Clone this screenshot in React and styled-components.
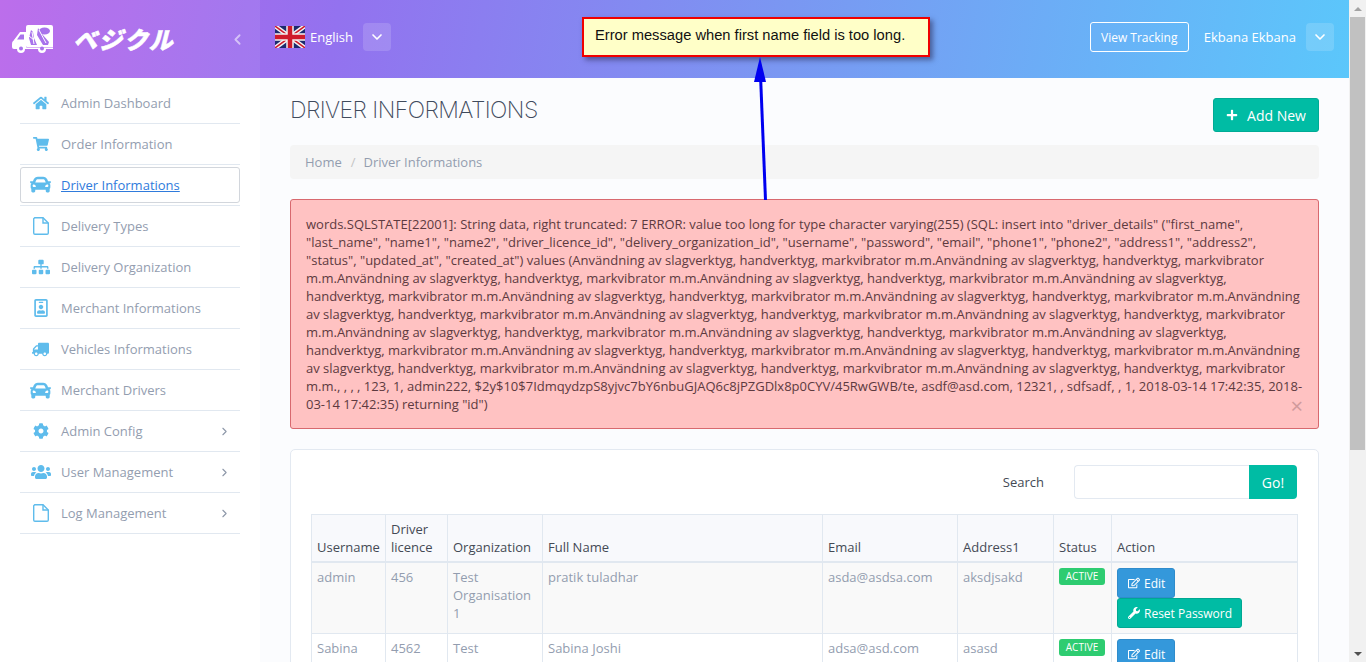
import React from "react";
import styled, { createGlobalStyle } from "styled-components";
import {
  FaHome,
  FaShoppingCart,
  FaCar,
  FaSitemap,
  FaRegIdBadge,
  FaTruck,
  FaCog,
  FaUsers,
  FaPlus,
  FaRegEdit,
  FaWrench,
} from "react-icons/fa";
import { ChevronDown, ChevronLeft, ChevronRight } from "lucide-react";

const GlobalStyle = createGlobalStyle`
  html, body {
    margin: 0;
    height: 100%;
    overflow: hidden;
  }
  body {
    font-family: "Open Sans", "Liberation Sans", sans-serif;
    font-size: 13px;
    color: #73879c;
  }
  * {
    box-sizing: border-box;
  }
`;

const Shell = styled.div`
  position: relative;
  display: flex;
  height: 100vh;
  overflow: hidden;
`;

const Page = styled.div`
  flex: 1;
  min-width: 0;
  display: flex;
  flex-direction: column;
`;

const Header = styled.header`
  flex: none;
  display: flex;
  height: 78px;
  background: linear-gradient(100deg, #b763ea 0%, #9372ef 25%, #7a97f2 58%, #5bc7fb 100%);
`;

const Brand = styled.div`
  flex: none;
  width: 260px;
  display: flex;
  align-items: center;
  padding: 0 14px 0 12px;
  background: rgba(255, 255, 255, 0.07);
  color: #fff;
`;

const LogoText = styled.span`
  margin-left: 20px;
  font-family: "Noto Sans CJK JP", sans-serif;
  font-size: 24px;
  font-weight: 900;
  font-style: italic;
  line-height: 1;
  letter-spacing: 1.5px;
  color: #fff;
  -webkit-text-stroke: 0.5px #fff;
`;

const Collapse = styled.span`
  margin-left: auto;
  display: flex;
  color: rgba(255, 255, 255, 0.55);
`;

const TopBar = styled.div`
  flex: 1;
  display: flex;
  align-items: center;
  padding: 0 15px 4px;
  color: #fff;
`;

const Flag = styled.svg`
  flex: none;
  width: 30px;
  height: 22px;
`;

const Language = styled.span`
  margin-left: 5px;
  margin-right: 10px;
`;

const Caret = styled.button`
  flex: none;
  display: flex;
  align-items: center;
  justify-content: center;
  width: 28px;
  height: 28px;
  padding: 0;
  border: 0;
  border-radius: 4px;
  background: rgba(255, 255, 255, 0.15);
  color: #fff;
`;

const Tracking = styled.button`
  margin-left: auto;
  width: 99px;
  height: 30px;
  padding: 0;
  border: 1px solid #fff;
  border-radius: 3px;
  background: transparent;
  color: #fff;
  font: 12px "Open Sans", sans-serif;
`;

const UserName = styled.span`
  margin-left: 15px;
  margin-right: 10px;
`;

const Body = styled.div`
  flex: 1;
  min-height: 0;
  display: flex;
`;

const Sidebar = styled.nav`
  flex: none;
  width: 260px;
  padding: 5px 20px 0;
  background: #fff;
`;

const NavItem = styled.div`
  display: flex;
  align-items: center;
  height: 41px;
  border-bottom: 1px solid #e1e8f0;
  color: #939daf;
`;

const ActiveBox = styled.div`
  flex: 1;
  display: flex;
  align-items: center;
  height: 36px;
  margin-top: -1px;
  border: 1px solid #d2d6dc;
  border-radius: 3px;
`;

const NavIcon = styled.span`
  flex: none;
  width: 41px;
  display: flex;
  justify-content: center;
  margin-left: ${(p) => (p.$inBox ? "-1px" : "0")};
  color: #5fbcec;
  font-size: ${(p) => p.$size || 16}px;
  transform: ${(p) => (p.$flip ? "scaleX(-1)" : "none")};
`;

const NavLink = styled.a`
  color: #2f7bdc;
  text-decoration: underline;
`;

const NavArrow = styled.span`
  margin-left: auto;
  margin-right: 9px;
  display: flex;
  color: #8d97a8;
`;

const Main = styled.main`
  flex: 1;
  min-width: 0;
  padding: 20px 30px 0;
  background: #fbfcfe;
`;

const TitleRow = styled.div`
  display: flex;
  align-items: flex-start;
  justify-content: space-between;
  height: 47px;
`;

const Title = styled.h1`
  margin: 0;
  font-family: Inter, "Liberation Sans", sans-serif;
  font-size: 23px;
  font-weight: 200;
  line-height: 25px;
  letter-spacing: -0.55px;
  color: #3f4a5c;
`;

const AddButton = styled.button`
  display: flex;
  align-items: center;
  justify-content: center;
  gap: 9px;
  width: 106px;
  height: 34px;
  padding: 0;
  border: 1px solid #00ab95;
  border-radius: 3px;
  background: #00bca4;
  color: #fff;
  font: 14px "Open Sans", sans-serif;
`;

const Breadcrumb = styled.div`
  display: flex;
  align-items: center;
  height: 34px;
  padding: 0 15px;
  border-radius: 4px;
  background: #f5f5f5;
  color: #939daf;
`;

const Slash = styled.span`
  padding: 0 8px 0 9px;
  color: #c4c4c4;
`;

const Alert = styled.div`
  position: relative;
  margin-top: 20px;
  padding: 15px;
  border: 1px solid #d8696f;
  border-radius: 3px;
  background: #ffc2c2;
  color: #5d3a3f;
  line-height: 18px;
`;

const Close = styled.span`
  position: absolute;
  right: 15px;
  bottom: 13px;
  font-size: 22px;
  line-height: 20px;
  color: #d09a9c;
`;

const Card = styled.section`
  margin-top: 20px;
  padding: 15px 20px 0;
  border: 1px solid #e3e9f1;
  border-radius: 5px;
  background: #fff;
`;

const SearchRow = styled.div`
  display: flex;
  align-items: center;
  justify-content: flex-end;
  margin-right: 1px;
`;

const SearchLabel = styled.label`
  margin-right: 30px;
  font-weight: 500;
  color: #444a55;
`;

const SearchInput = styled.input`
  width: 175px;
  height: 34px;
  padding: 0 10px;
  border: 1px solid #e3e9f1;
  border-right: 0;
  border-radius: 4px 0 0 4px;
  background: #fff;
  outline: none;
`;

const GoButton = styled.button`
  width: 48px;
  height: 34px;
  padding: 0;
  border: 0;
  border-radius: 0 4px 4px 0;
  background: #00bca4;
  color: #fff;
  font: 14px "Open Sans", sans-serif;
`;

const Table = styled.table`
  width: 986px;
  margin-top: 15px;
  border-collapse: collapse;
  table-layout: fixed;
  line-height: 18px;
`;

const Col = styled.col`
  width: ${(p) => p.$w}px;
`;

const Th = styled.th`
  padding: 5px;
  border: 1px solid #e1e8f0;
  border-bottom-width: 2px;
  background: #f8f9fc;
  color: #444a55;
  font-weight: 500;
  text-align: left;
  vertical-align: bottom;
`;

const Row = styled.tr`
  background: ${(p) => (p.$odd ? "#f9f9f9" : "#fff")};
`;

const Td = styled.td`
  padding: 5px;
  border: 1px solid #e1e8f0;
  color: #939daf;
  vertical-align: top;
`;

const Badge = styled.span`
  display: block;
  width: 46px;
  height: 17px;
  border-radius: 3px;
  background: #2ecc71;
  color: #fff;
  font-size: 10px;
  font-weight: 500;
  line-height: 17px;
  text-align: center;
`;

const ActionButton = styled.button`
  display: flex;
  align-items: center;
  gap: 4px;
  width: ${(p) => p.$w}px;
  height: 30px;
  padding: 0 0 0 10px;
  border: 1px solid ${(p) => (p.$tone === "edit" ? "#2f8ccb" : "#00a893")};
  border-radius: 3px;
  background: ${(p) => (p.$tone === "edit" ? "#3498db" : "#00bca4")};
  color: #fff;
  font: 12px "Open Sans", sans-serif;
  white-space: nowrap;
`;

const Scrollbar = styled.div`
  flex: none;
  width: 17px;
  display: flex;
  flex-direction: column;
  background: #f1f1f1;
`;

const ScrollArrow = styled.div`
  flex: none;
  height: 17px;
  display: flex;
  align-items: center;
  justify-content: center;
  &::before {
    content: "";
    border-left: 4px solid transparent;
    border-right: 4px solid transparent;
    ${(p) => (p.$up ? "border-bottom: 4px solid #a3a3a3;" : "border-top: 4px solid #505050;")}
  }
`;

const ScrollThumb = styled.div`
  flex: none;
  height: 433px;
  margin: 0 1px;
  background: #c1c1c1;
`;

const ScrollTrack = styled.div`
  flex: 1;
`;

const Note = styled.div`
  position: absolute;
  left: 582px;
  top: 17px;
  width: 348px;
  height: 40px;
  padding-left: 11px;
  border: 2px solid #f00000;
  background: #ffffc8;
  box-shadow: 3px 3px 5px rgba(40, 40, 80, 0.55);
  color: #111;
  font-family: "Liberation Sans", Arial, sans-serif;
  font-size: 14.7px;
  line-height: 32px;
`;

const Arrow = styled.svg`
  position: absolute;
  left: 750px;
  top: 55px;
  width: 24px;
  height: 148px;
`;

const phrase = "Användning av slagverktyg, handverktyg, markvibrator m.m.";
const errorText =
  'words.SQLSTATE[22001]: String data, right truncated: 7 ERROR: value too long for type character varying(255) (SQL: insert into "driver_details" ("first_name", "last_name", "name1", "name2", "driver_licence_id", "delivery_organization_id", "username", "password", "email", "phone1", "phone2", "address1", "address2", "status", "updated_at", "created_at") values (' +
  phrase.repeat(18) +
  ', , , , 123, 1, admin222, $2y$10$7IdmqydzpS8yjvc7bY6nbuGJAQ6c8jPZGDlx8p0CYV/45RwGWB/te, asdf@asd.com, 12321, , sdfsadf, , 1, 2018-03-14 17:42:35, 2018-03-14 17:42:35) returning "id")';

function FileIcon() {
  return (
    <svg width="16" height="18" viewBox="0 0 16 18" fill="none" stroke="currentColor" strokeWidth="1.400">
      <path d="M1.700 0.700H10L15.300 6V16a1.300 1.300 0 0 1-1.300 1.300H2A1.300 1.300 0 0 1 0.700 16V1.700z" />
      <path d="M10 0.700V6H15.300" />
    </svg>
  );
}

const navItems = [
  { label: "Admin Dashboard", icon: FaHome, size: 16 },
  { label: "Order Information", icon: FaShoppingCart, size: 16 },
  { label: "Driver Informations", icon: FaCar, size: 21, active: true },
  { label: "Delivery Types", icon: FileIcon },
  { label: "Delivery Organization", icon: FaSitemap, size: 18 },
  { label: "Merchant Informations", icon: FaRegIdBadge, size: 18 },
  { label: "Vehicles Informations", icon: FaTruck, size: 17, flip: true },
  { label: "Merchant Drivers", icon: FaCar, size: 21 },
  { label: "Admin Config", icon: FaCog, size: 16, more: true },
  { label: "User Management", icon: FaUsers, size: 20, more: true },
  { label: "Log Management", icon: FileIcon, more: true },
];

const columns = [74, 62, 95, 280, 135, 96, 58, 186];
const headings = ["Username", "Driver licence", "Organization", "Full Name", "Email", "Address1", "Status", "Action"];

const drivers = [
  { user: "admin", licence: "456", org: "Test Organisation 1", name: "pratik tuladhar", email: "asda@asdsa.com", address: "aksdjsakd", reset: true },
  { user: "Sabina", licence: "4562", org: "Test Organisation 1", name: "Sabina Joshi", email: "adsa@asd.com", address: "asasd", reset: true },
];

function TruckLogo() {
  return (
    <svg width="41" height="28" viewBox="0 0 41 28" style={{ flex: "none" }}>
      <path
        fill="#fff"
        d="M14 2q0-2 2-2h23q2 0 2 2v21H15l-1-2V8H8.500L3 14.500 1 16q-1 1-1 3v3q0 2 2 2h3a4 4 0 0 0 8 0h13a4 4 0 0 0 8 0h7v-1.500H14z"
      />
      <path fill="#fff" d="M14 7H8L2 15v8h12z" />
      <path fill="#a873ec" d="M8.500 9.500H12v5H5z" />
      <circle cx="9" cy="23.500" r="2" fill="#a873ec" />
      <circle cx="30" cy="23.500" r="2" fill="#a873ec" />
      <path fill="#a873ec" d="M19 5l2 2 1 6 3 7h-6l-2-7zM26 3l4 6 7 8-1 3h-5l-6-10z" />
      <ellipse cx="32.500" cy="6" rx="5.500" ry="3.500" fill="#a873ec" />
      <path stroke="#fff" strokeWidth="1" fill="none" d="M20 7l2 12M17 11l5 4M24 10l-3 4M27 5l7 13" />
    </svg>
  );
}

function UnionJack() {
  return (
    <Flag viewBox="0 0 30 22">
      <rect width="30" height="22" fill="#1c2a6e" />
      <path d="M0 0L30 22M30 0L0 22" stroke="#f2f2f2" strokeWidth="4.500" />
      <path d="M0 0L30 22M30 0L0 22" stroke="#cf1b2b" strokeWidth="1.500" />
      <path d="M15 0V22M0 11H30" stroke="#f2f2f2" strokeWidth="7.500" />
      <path d="M15 0V22M0 11H30" stroke="#cf1b2b" strokeWidth="4.500" />
    </Flag>
  );
}

function App() {
  return (
    <Shell>
      <GlobalStyle />
      <Page>
        <Header>
          <Brand>
            <TruckLogo />
            <LogoText>ベジクル</LogoText>
            <Collapse>
              <ChevronLeft size={17} strokeWidth={2.5} />
            </Collapse>
          </Brand>
          <TopBar>
            <UnionJack />
            <Language>English</Language>
            <Caret>
              <ChevronDown size={16} strokeWidth={2.5} />
            </Caret>
            <Tracking>View Tracking</Tracking>
            <UserName>Ekbana Ekbana</UserName>
            <Caret>
              <ChevronDown size={16} strokeWidth={2.5} />
            </Caret>
          </TopBar>
        </Header>
        <Body>
          <Sidebar>
            {navItems.map((item) => {
              const Icon = item.icon;
              return (
                <NavItem key={item.label}>
                  {item.active ? (
                    <ActiveBox>
                      <NavIcon $size={item.size} $inBox>
                        <Icon />
                      </NavIcon>
                      <NavLink>{item.label}</NavLink>
                    </ActiveBox>
                  ) : (
                    <>
                      <NavIcon $size={item.size} $flip={item.flip}>
                        <Icon />
                      </NavIcon>
                      {item.label}
                      {item.more && (
                        <NavArrow>
                          <ChevronRight size={13} strokeWidth={2} />
                        </NavArrow>
                      )}
                    </>
                  )}
                </NavItem>
              );
            })}
          </Sidebar>
          <Main>
            <TitleRow>
              <Title>DRIVER INFORMATIONS</Title>
              <AddButton>
                <FaPlus size={12} />
                Add New
              </AddButton>
            </TitleRow>
            <Breadcrumb>
              Home
              <Slash>/</Slash>
              Driver Informations
            </Breadcrumb>
            <Alert>
              {errorText}
              <Close>×</Close>
            </Alert>
            <Card>
              <SearchRow>
                <SearchLabel>Search</SearchLabel>
                <SearchInput />
                <GoButton>Go!</GoButton>
              </SearchRow>
              <Table>
                <colgroup>
                  {columns.map((w, i) => (
                    <Col key={i} $w={w} />
                  ))}
                </colgroup>
                <thead>
                  <tr>
                    {headings.map((h) => (
                      <Th key={h}>{h}</Th>
                    ))}
                  </tr>
                </thead>
                <tbody>
                  {drivers.map((d, i) => (
                    <Row key={d.user} $odd={i % 2 === 0}>
                      <Td>{d.user}</Td>
                      <Td>{d.licence}</Td>
                      <Td>{d.org}</Td>
                      <Td>{d.name}</Td>
                      <Td>{d.email}</Td>
                      <Td>{d.address}</Td>
                      <Td>
                        <Badge>ACTIVE</Badge>
                      </Td>
                      <Td>
                        <ActionButton $tone="edit" $w={58}>
                          <FaRegEdit size={12} />
                          Edit
                        </ActionButton>
                        {d.reset && (
                          <ActionButton $tone="reset" $w={125}>
                            <FaWrench size={12} />
                            Reset Password
                          </ActionButton>
                        )}
                      </Td>
                    </Row>
                  ))}
                </tbody>
              </Table>
            </Card>
          </Main>
        </Body>
      </Page>
      <Scrollbar>
        <ScrollArrow $up />
        <ScrollThumb />
        <ScrollTrack />
        <ScrollArrow />
      </Scrollbar>
      <Note>Error message when first name field is too long.</Note>
      <Arrow viewBox="0 0 24 148">
        <path d="M15.500 145L10.500 20" stroke="#0000f0" strokeWidth="3" fill="none" />
        <path d="M10 2L16 27H4z" fill="#0000f0" />
      </Arrow>
    </Shell>
  );
}

export default App;
